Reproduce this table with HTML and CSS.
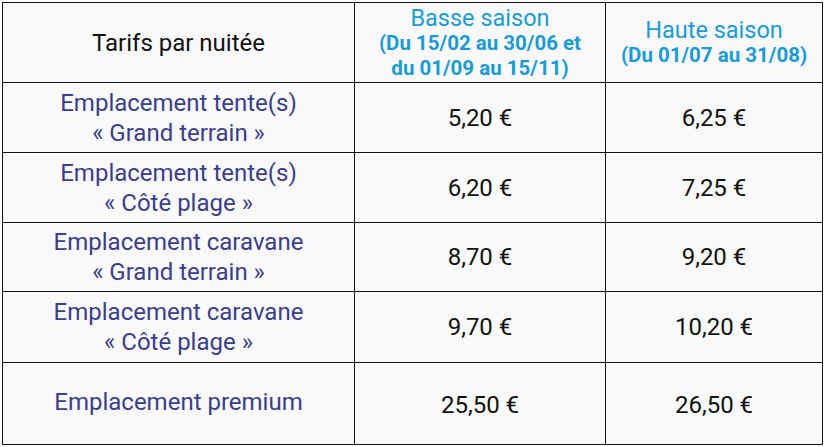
FILE: index.html
```html
<!DOCTYPE html>
<html lang="fr">
<head>
<meta charset="utf-8">
<title>Tarifs</title>
<link rel="stylesheet" href="styles.css">
</head>
<body>
<table class="tarifs">
  <colgroup>
    <col class="c1"><col class="c2"><col class="c3">
  </colgroup>
  <tr class="head">
    <th class="label-head">Tarifs par nuitée</th>
    <th class="season"><span class="s-title">Basse saison</span><span class="s-dates">(Du 15/02 au 30/06 et<br>du 01/09 au 15/11)</span></th>
    <th class="season"><span class="s-title">Haute saison</span><span class="s-dates">(Du 01/07 au 31/08)</span></th>
  </tr>
  <tr class="r70">
    <td class="name">Emplacement tente(s)<br>« Grand terrain »</td>
    <td class="price">5,20 €</td>
    <td class="price">6,25 €</td>
  </tr>
  <tr class="r70">
    <td class="name">Emplacement tente(s)<br>« Côté plage »</td>
    <td class="price">6,20 €</td>
    <td class="price">7,25 €</td>
  </tr>
  <tr class="r69">
    <td class="name">Emplacement caravane<br>« Grand terrain »</td>
    <td class="price">8,70 €</td>
    <td class="price">9,20 €</td>
  </tr>
  <tr class="r71">
    <td class="name">Emplacement caravane<br>« Côté plage »</td>
    <td class="price">9,70 €</td>
    <td class="price">10,20 €</td>
  </tr>
  <tr class="r82">
    <td class="name premium">Emplacement premium</td>
    <td class="price low">25,50 €</td>
    <td class="price low">26,50 €</td>
  </tr>
</table>
</body>
</html>
```

FILE: styles.css
```css
html, body {
  margin: 0;
  padding: 0;
  background: #ffffff;
}
body {
  padding: 2px 0 0 2px;
  font-family: Roboto, "Liberation Sans", sans-serif;
}
.tarifs {
  border-collapse: collapse;
  width: 820px;
  table-layout: fixed;
  background: #f9f9f9;
}
.c1 { width: 352px; }
.c2 { width: 251px; }
.c3 { width: 217px; }
.tarifs th, .tarifs td {
  border: 1px solid #111111;
  padding: 0;
  text-align: center;
  vertical-align: middle;
  font-weight: 400;
}
.head { height: 80px; }
.r70 { height: 70px; }
.r69 { height: 69px; }
.r71 { height: 71px; }
.r82 { height: 82px; }
.label-head {
  font-size: 24px;
  color: #111111;
  padding-top: 2px;
}
.season {
  color: #1b9bd6;
}
.s-title {
  display: block;
  font-size: 23.5px;
  line-height: 26px;
}
.s-dates {
  display: block;
  font-size: 20.5px;
  font-weight: 700;
  line-height: 25px;
}
.name {
  color: #3a3e8c;
  font-size: 24px;
  line-height: 30px;
}
.name.premium {
  padding-bottom: 4px;
}
.price {
  color: #111111;
  font-size: 24px;
}
.price.low {
  padding-top: 2px;
}
```
